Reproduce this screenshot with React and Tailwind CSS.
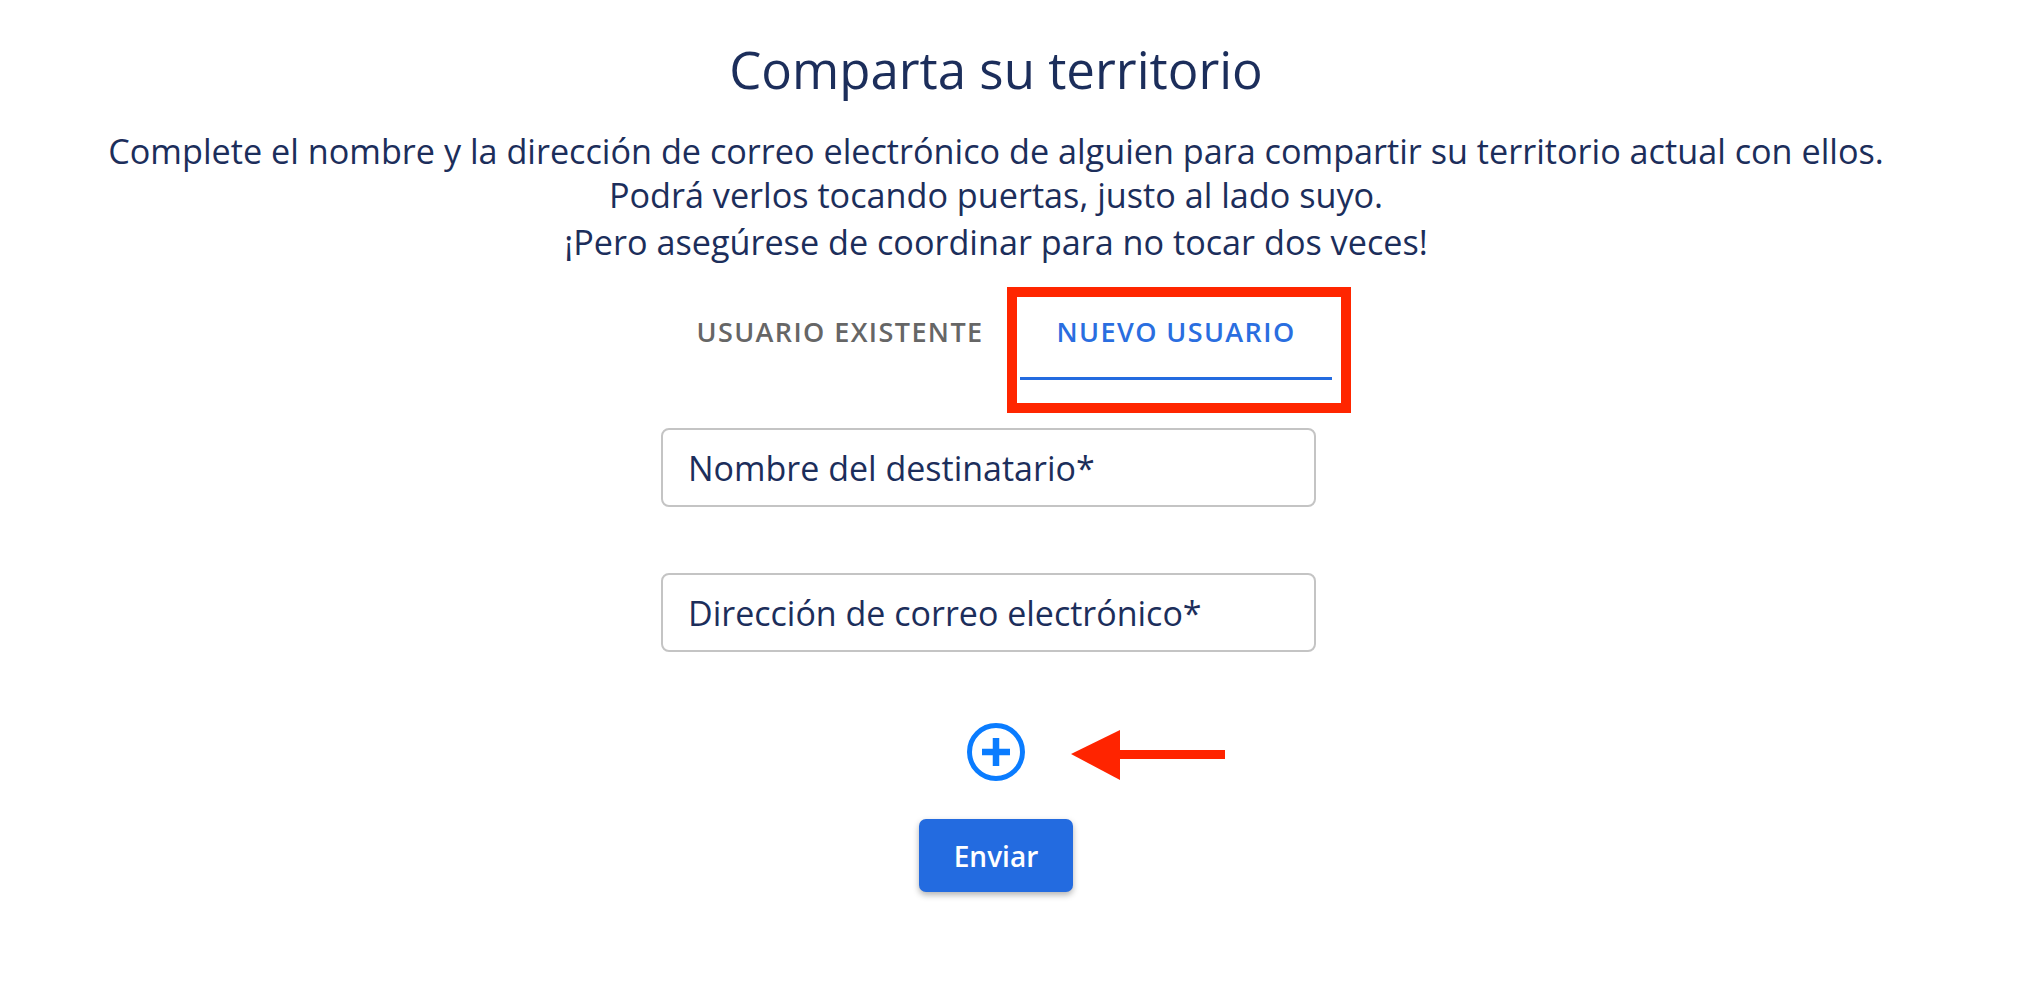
import { useState } from 'react';

function PlusCircle() {
  return (
    <svg width="58" height="58" viewBox="0 0 58 58" fill="none">
      <circle cx="29" cy="29" r="26.5" stroke="#0a7cff" strokeWidth="5" />
      <path d="M15 29h28M29 15v28" stroke="#0a7cff" strokeWidth="6.5" />
    </svg>
  );
}

function RedArrow() {
  return (
    <svg width="154" height="50" viewBox="0 0 154 50">
      <polygon points="0,24 49,0 49,50" fill="#ff2400" />
      <rect x="45" y="20" width="109" height="9" fill="#ff2400" />
    </svg>
  );
}

export default function App() {
  const [tab, setTab] = useState('nuevo');

  const tabClass = (active) =>
    `pt-[16px] pb-[29px] border-b-[3px] text-[27px] leading-[32px] tracking-[1.4px] font-semibold uppercase ${
      active ? 'border-[#236be0] text-[#2a6ee0]' : 'border-transparent text-[#666666]'
    }`;

  return (
    <div className="min-h-screen bg-white pr-[46px] font-['Open_Sans',sans-serif]">
      <main className="flex flex-col items-center pt-[39px] text-[#1c2e5b]">
        <h1 className="text-[51px] leading-[60px] font-normal">Comparta su territorio</h1>

        <p className="mt-[30px] text-[34.2px] leading-[44px] text-center whitespace-nowrap">
          Complete el nombre y la dirección de correo electrónico de alguien para compartir su territorio actual con ellos.
          <br />
          Podrá verlos tocando puertas, justo al lado suyo.
        </p>
        <p className="mt-[3px] text-[34.2px] leading-[44px] text-center">
          ¡Pero asegúrese de coordinar para no tocar dos veces!
        </p>

        {/* Tabs */}
        <div className="mt-[36px] flex w-[672px]">
          <button className={`w-[360px] ${tabClass(tab === 'existente')}`} onClick={() => setTab('existente')}>
            Usuario existente
          </button>
          <button className={`relative w-[312px] ${tabClass(tab === 'nuevo')}`} onClick={() => setTab('nuevo')}>
            Nuevo usuario
            <span className="pointer-events-none absolute -left-[13px] -top-[13px] -right-[19px] -bottom-[36px] border-[10px] border-[#ff2600]" />
          </button>
        </div>

        {/* Fields */}
        <div className="flex w-[672px] flex-col">
          <input
            placeholder="Nombre del destinatario*"
            className="mt-[48px] ml-[1px] h-[79px] w-[655px] rounded-[8px] border-2 border-[#c4c4c4] pl-[25px] text-[34px] text-[#1c2e5b] outline-none placeholder:text-[#1c2e5b]"
          />
          <input
            placeholder="Dirección de correo electrónico*"
            className="mt-[66px] ml-[1px] h-[79px] w-[655px] rounded-[8px] border-2 border-[#c4c4c4] pl-[25px] text-[34px] text-[#1c2e5b] outline-none placeholder:text-[#1c2e5b]"
          />
        </div>

        <div className="relative mt-[71px] h-[58px] w-[58px]">
          <button className="block">
            <PlusCircle />
          </button>
          <div className="absolute left-[104px] top-[7px]">
            <RedArrow />
          </div>
        </div>

        <button className="mt-[38px] h-[73px] w-[154px] rounded-[7px] bg-[#236be0] text-[28px] font-semibold text-white shadow-[0_3px_6px_rgba(0,0,0,0.3)]">
          Enviar
        </button>
      </main>
    </div>
  );
}
